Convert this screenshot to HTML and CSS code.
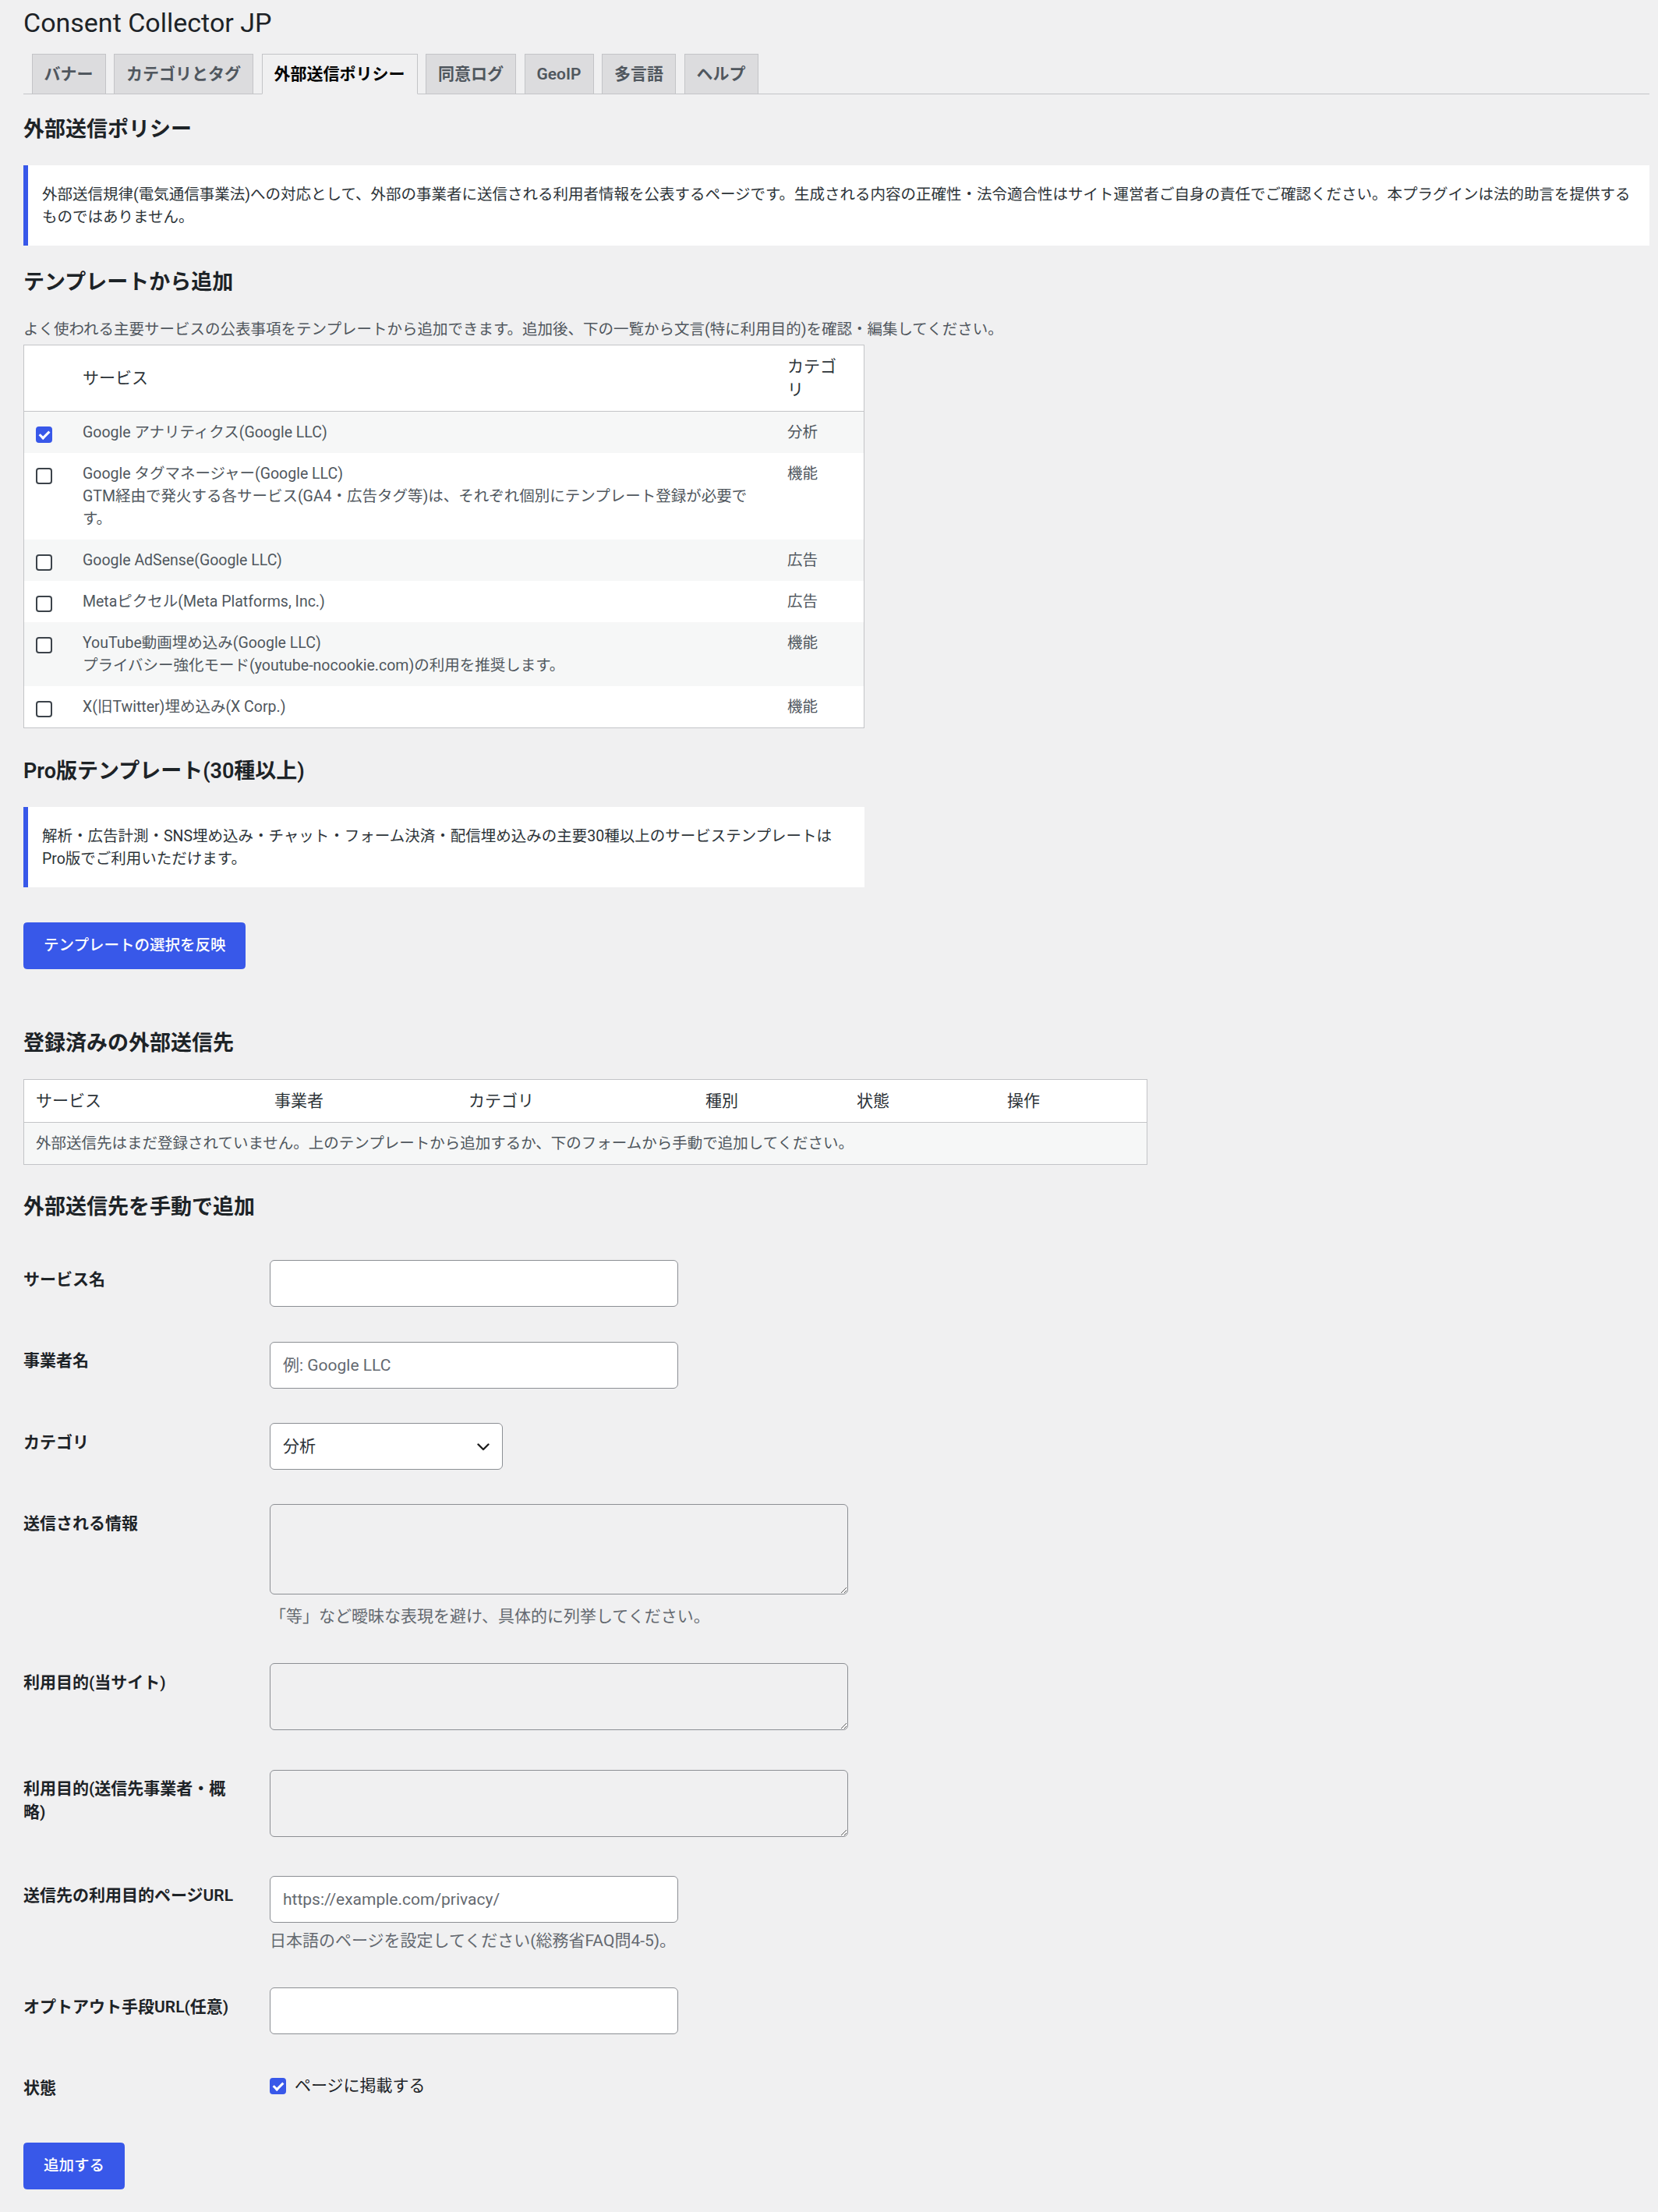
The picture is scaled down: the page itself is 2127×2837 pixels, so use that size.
FILE: index.html
```html
<!DOCTYPE html>
<html lang="ja">
<head>
    <meta charset="UTF-8">
    <meta name="viewport" content="width=device-width, initial-scale=1.0">
    <title>Consent Collector JP</title>
    <link rel="stylesheet" href="styles.css">
</head>
<body>

<div class="wrap">
    <h1 class="page-title">Consent Collector JP</h1>

    <nav class="nav-tabs">
        <a class="nav-tab" href="#">バナー</a>
        <a class="nav-tab" href="#">カテゴリとタグ</a>
        <a class="nav-tab active" href="#">外部送信ポリシー</a>
        <a class="nav-tab" href="#">同意ログ</a>
        <a class="nav-tab" href="#">GeoIP</a>
        <a class="nav-tab" href="#">多言語</a>
        <a class="nav-tab" href="#">ヘルプ</a>
    </nav>

    <h2>外部送信ポリシー</h2>
    <div class="notice">
        <p>外部送信規律(電気通信事業法)への対応として、外部の事業者に送信される利用者情報を公表するページです。生成される内容の正確性・法令適合性はサイト運営者ご自身の責任でご確認ください。本プラグインは法的助言を提供するものではありません。</p>
    </div>

    <h2>テンプレートから追加</h2>
    <p class="description">よく使われる主要サービスの公表事項をテンプレートから追加できます。追加後、下の一覧から文言(特に利用目的)を確認・編集してください。</p>

    <table class="list-table tpl-table">
        <thead>
            <tr>
                <th class="col-check"></th>
                <th class="col-service">サービス</th>
                <th class="col-cat">カテゴリ</th>
            </tr>
        </thead>
        <tbody>
            <tr>
                <td class="col-check"><input type="checkbox" class="check" checked></td>
                <td class="col-service">Google アナリティクス(Google LLC)</td>
                <td class="col-cat">分析</td>
            </tr>
            <tr>
                <td class="col-check"><input type="checkbox" class="check"></td>
                <td class="col-service">Google タグマネージャー(Google LLC)<span class="service-note">GTM経由で発火する各サービス(GA4・広告タグ等)は、それぞれ個別にテンプレート登録が必要です。</span></td>
                <td class="col-cat">機能</td>
            </tr>
            <tr>
                <td class="col-check"><input type="checkbox" class="check"></td>
                <td class="col-service">Google AdSense(Google LLC)</td>
                <td class="col-cat">広告</td>
            </tr>
            <tr>
                <td class="col-check"><input type="checkbox" class="check"></td>
                <td class="col-service">Metaピクセル(Meta Platforms, Inc.)</td>
                <td class="col-cat">広告</td>
            </tr>
            <tr>
                <td class="col-check"><input type="checkbox" class="check"></td>
                <td class="col-service">YouTube動画埋め込み(Google LLC)<span class="service-note">プライバシー強化モード(youtube-nocookie.com)の利用を推奨します。</span></td>
                <td class="col-cat">機能</td>
            </tr>
            <tr>
                <td class="col-check"><input type="checkbox" class="check"></td>
                <td class="col-service">X(旧Twitter)埋め込み(X Corp.)</td>
                <td class="col-cat">機能</td>
            </tr>
        </tbody>
    </table>

    <h2>Pro版テンプレート(30種以上)</h2>
    <div class="notice notice-narrow">
        <p>解析・広告計測・SNS埋め込み・チャット・フォーム決済・配信埋め込みの主要30種以上のサービステンプレートはPro版でご利用いただけます。</p>
    </div>

    <p class="submit submit-templates">
        <button class="button-primary" type="button">テンプレートの選択を反映</button>
    </p>

    <h2>登録済みの外部送信先</h2>
    <table class="list-table registered-table">
        <thead>
            <tr>
                <th class="w-service">サービス</th>
                <th class="w-vendor">事業者</th>
                <th class="w-cat">カテゴリ</th>
                <th class="w-type">種別</th>
                <th class="w-state">状態</th>
                <th class="w-ops">操作</th>
            </tr>
        </thead>
        <tbody>
            <tr>
                <td colspan="6">外部送信先はまだ登録されていません。上のテンプレートから追加するか、下のフォームから手動で追加してください。</td>
            </tr>
        </tbody>
    </table>

    <h2>外部送信先を手動で追加</h2>
    <table class="form-table">
        <tr>
            <th><label for="service">サービス名</label></th>
            <td><input type="text" id="service" class="regular-text"></td>
        </tr>
        <tr>
            <th><label for="vendor">事業者名</label></th>
            <td><input type="text" id="vendor" class="regular-text" placeholder="例: Google LLC"></td>
        </tr>
        <tr>
            <th><label for="category">カテゴリ</label></th>
            <td>
                <div class="select-wrap">
                    <select id="category" class="select">
                        <option>分析</option>
                        <option>広告</option>
                        <option>機能</option>
                    </select>
                    <svg class="chevron" width="16" height="10" viewBox="0 0 16 10" aria-hidden="true">
                        <path d="M1.5 1.5L8 8l6.5-6.5" fill="none" stroke="#1e1e1e" stroke-width="2.4" stroke-linecap="round" stroke-linejoin="round"/>
                    </svg>
                </div>
            </td>
        </tr>
        <tr>
            <th><label for="data">送信される情報</label></th>
            <td>
                <textarea id="data" class="large-text tall"></textarea>
                <p class="help help-area">「等」など曖昧な表現を避け、具体的に列挙してください。</p>
            </td>
        </tr>
        <tr>
            <th><label for="purpose-site">利用目的(当サイト)</label></th>
            <td><textarea id="purpose-site" class="large-text"></textarea></td>
        </tr>
        <tr>
            <th><label for="purpose-vendor">利用目的(送信先事業者・概略)</label></th>
            <td><textarea id="purpose-vendor" class="large-text"></textarea></td>
        </tr>
        <tr>
            <th><label for="policy-url">送信先の利用目的ページURL</label></th>
            <td>
                <input type="text" id="policy-url" class="regular-text" placeholder="https://example.com/privacy/">
                <p class="help">日本語のページを設定してください(総務省FAQ問4-5)。</p>
            </td>
        </tr>
        <tr>
            <th><label for="optout-url">オプトアウト手段URL(任意)</label></th>
            <td><input type="text" id="optout-url" class="regular-text"></td>
        </tr>
        <tr>
            <th>状態</th>
            <td>
                <label class="check-label"><input type="checkbox" class="check" checked> ページに掲載する</label>
            </td>
        </tr>
    </table>

    <p class="submit submit-form">
        <button class="button-primary" type="button">追加する</button>
    </p>
</div>

</body>
</html>
```

FILE: styles.css
```css
body {
    margin: 0;
    background: #f0f0f1;
    color: #3c434a;
    font-family: Roboto, "Noto Sans CJK JP", sans-serif;
    font-size: 19.5px;
    line-height: 29px;
}
.wrap {
    padding: 7px 11px 20px 30px;
}
.page-title {
    margin: 0;
    font-size: 34px;
    font-weight: 400;
    line-height: 44px;
    color: #1d2327;
}
.nav-tabs {
    display: flex;
    margin-top: 18px;
    border-bottom: 1px solid #c3c4c7;
}
.nav-tab {
    margin: 0 0 -1px 10.5px;
    padding: 7.5px 15px;
    border: 1px solid #c3c4c7;
    background: #dcdcde;
    color: #50575e;
    font-size: 21px;
    font-weight: 600;
    line-height: 35px;
    text-decoration: none;
}
.nav-tab.active {
    background: #f0f0f1;
    border-bottom-color: #f0f0f1;
    color: #000;
}
h2 {
    margin: 28px 0;
    font-size: 27px;
    font-weight: 600;
    line-height: 35px;
    color: #1d2327;
}
.notice {
    margin: 28px 0 30px;
    padding: 1px 16px;
    border-left: 6px solid #3858e9;
    background: #fff;
    color: #2c3338;
}
.notice p {
    margin: 19.5px 0;
    padding: 2px;
}
.notice-narrow {
    width: 1079px;
    box-sizing: border-box;
}
.description {
    margin: 28px 0 5px;
    color: #50575e;
}

/* tables */
.list-table {
    border-collapse: collapse;
    table-layout: fixed;
    background: #fff;
    border: 1px solid #c3c4c7;
    margin-bottom: 38px;
}
.list-table th {
    padding: 12px 15px;
    border-bottom: 1px solid #c3c4c7;
    font-size: 21px;
    font-weight: 400;
    line-height: 30px;
    color: #2c3338;
    text-align: left;
    vertical-align: middle;
}
.list-table td {
    padding: 12px 15px;
    color: #50575e;
    vertical-align: top;
}
.list-table tbody tr:nth-child(odd) {
    background: #f6f7f7;
}
.tpl-table {
    width: 1079px;
}
.tpl-table .col-check {
    width: 30px;
}
.tpl-table .col-service {
    padding-right: 30px;
}
.tpl-table .col-cat {
    width: 73px;
    padding-right: 25px;
}
.service-note {
    display: block;
}
.registered-table {
    width: 1440px;
    margin-bottom: 37px;
}
.w-service { width: 276px; }
.w-vendor { width: 219px; }
.w-cat { width: 274px; }
.w-type { width: 164px; }
.w-state { width: 163px; }
.w-ops { width: 164px; }

/* checkbox */
.check {
    appearance: none;
    position: relative;
    display: block;
    width: 21px;
    height: 21px;
    margin: 6.5px 0 0;
    box-sizing: border-box;
    border: 2px solid #3c434a;
    border-radius: 4px;
    background: #fff;
}
.check:checked {
    border-color: #3858e9;
    background: #3858e9;
}
.check:checked::after {
    content: "";
    position: absolute;
    left: 5px;
    top: 1px;
    width: 5px;
    height: 10px;
    border: solid #fff;
    border-width: 0 3px 3px 0;
    transform: rotate(45deg);
}

/* form */
.form-table {
    border-collapse: collapse;
}
.form-table th {
    width: 272px;
    padding: 32px 29px 30px 0;
    font-size: 21px;
    font-weight: 600;
    line-height: 30px;
    color: #1d2327;
    text-align: left;
    vertical-align: top;
}
.form-table td {
    padding: 22.2px 15px;
    font-size: 21px;
    line-height: 27px;
    vertical-align: middle;
}
.regular-text,
.select,
.large-text {
    display: block;
    box-sizing: border-box;
    margin: 0;
    border: 1px solid #8c8f94;
    border-radius: 6px;
    font-family: inherit;
    font-size: 21px;
    color: #2c3338;
}
.regular-text {
    width: 524px;
    height: 60px;
    padding: 0 16px;
    background: #fff;
}
.regular-text::placeholder {
    color: #646970;
}
.select-wrap {
    position: relative;
    width: 299px;
}
.select {
    appearance: none;
    width: 299px;
    height: 60px;
    padding: 0 48px 0 16px;
    background: #fff;
}
.chevron {
    position: absolute;
    right: 17px;
    top: 26px;
    pointer-events: none;
}
.large-text {
    width: 742px;
    height: 86px;
    margin-bottom: 6.5px;
    background: #f0f0f1;
}
.large-text.tall {
    height: 116px;
}
.help {
    margin: 8px 0 0;
    line-height: 30px;
    color: #646970;
}
.help-area {
    margin-top: 13px;
}
.check-label {
    display: inline-flex;
    align-items: center;
    gap: 11px;
    color: #1d2327;
}
.check-label .check {
    margin: 0;
}

/* buttons */
.submit {
    margin: 0;
    padding: 0;
}
.submit-templates {
    margin: 45px 0 78px;
}
.submit-form {
    margin-top: 25px;
}
.button-primary {
    height: 60px;
    padding: 0 25px;
    border: 1px solid #3858e9;
    border-radius: 4.5px;
    background: #3858e9;
    color: #fff;
    font-family: inherit;
    font-size: 19.5px;
    font-weight: 500;
    line-height: 58px;
    cursor: pointer;
}
```
